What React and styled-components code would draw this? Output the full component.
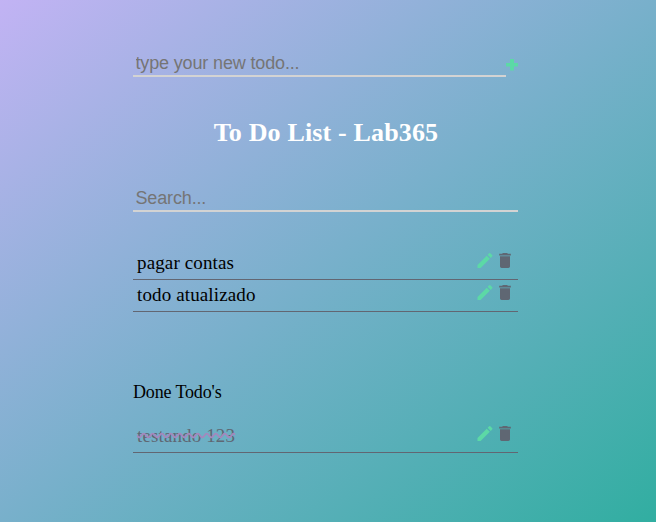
import React from "react";
import styled, { createGlobalStyle } from "styled-components";
import { MdEdit, MdDelete } from "react-icons/md";

const GlobalStyle = createGlobalStyle`
  * { box-sizing: border-box; margin: 0; padding: 0; }
  body { font-family: "Liberation Serif", "Times New Roman", serif; }
`;

const Page = styled.main`
  height: 522px;
  overflow: hidden;
  padding: 50px 138px 0 133px;
  background: linear-gradient(to bottom right, #c2b3f4, #78b0cb 50%, #31aea1);
`;

const Form = styled.form`
  display: flex;
  align-items: flex-start;
  height: 27px;
`;

const Input = styled.input`
  flex: 1;
  min-width: 0;
  height: 27px;
  padding: 2px 2px 0 2.5px;
  border: 0;
  border-bottom: 2px solid lightgray;
  outline: 0;
  background: transparent;
  font: 18px "Liberation Sans", Arial, sans-serif;
  letter-spacing: -0.15px;
  &::placeholder { color: #757575; }
`;

const AddButton = styled.button`
  display: flex;
  padding: 9px 0 0;
  border: 0;
  background: none;
  color: #5cd9a6;
`;

const Title = styled.h1`
  margin: 41px 0 37px;
  padding-left: 1px;
  font-size: 26px;
  letter-spacing: 0.16px;
  line-height: 30px;
  text-align: center;
  color: white;
`;

const List = styled.ul`
  list-style: none;
  margin-top: ${(p) => p.$gap}px;
`;

const Item = styled.li`
  display: flex;
  justify-content: space-between;
  height: 32px;
  padding: 3px 3px 0 4px;
  border-bottom: 1px solid #626672;
`;

const Label = styled.span`
  font-size: 19px;
  letter-spacing: 0.13px;
  line-height: 24px;
  color: ${(p) => (p.$done ? "#5f6773" : "black")};
  text-decoration: ${(p) => (p.$done ? "line-through wavy #a488bd" : "none")};
`;

const Actions = styled.div`
  display: flex;
  transform: translateY(-0.5px);
`;

const IconButton = styled.button`
  display: flex;
  height: 20px;
  border: 0;
  background: none;
  color: ${(p) => p.$color};
  font-size: 20px;
`;

const DoneTitle = styled.h2`
  margin-top: 69px;
  font-size: 18px;
  letter-spacing: -0.15px;
  line-height: 22px;
  font-weight: 400;
`;

function Todo({ text, done }) {
  return (
    <Item>
      <Label $done={done}>{text}</Label>
      <Actions>
        <IconButton $color="#5cd9a6" aria-label="Edit"><MdEdit /></IconButton>
        <IconButton $color="#5f6773" aria-label="Delete"><MdDelete /></IconButton>
      </Actions>
    </Item>
  );
}

export default function App() {
  return (
    <>
      <GlobalStyle />
      <Page>
        <Form>
          <Input placeholder="type your new todo..." />
          <AddButton type="button" aria-label="Add">
            <svg width="12" height="12" viewBox="0 0 12 12" fill="currentColor">
              <path d="M4 0h4v4h4v3.500H8v4H4v-4H0V4h4z" />
            </svg>
          </AddButton>
        </Form>
        <Title>To Do List - Lab365</Title>
        <Form>
          <Input placeholder="Search..." />
        </Form>
        <List $gap={36}>
          <Todo text="pagar contas" />
          <Todo text="todo atualizado" />
        </List>
        <DoneTitle>Done Todo's</DoneTitle>
        <List $gap={18}>
          <Todo text="testando 123" done />
        </List>
      </Page>
    </>
  );
}
